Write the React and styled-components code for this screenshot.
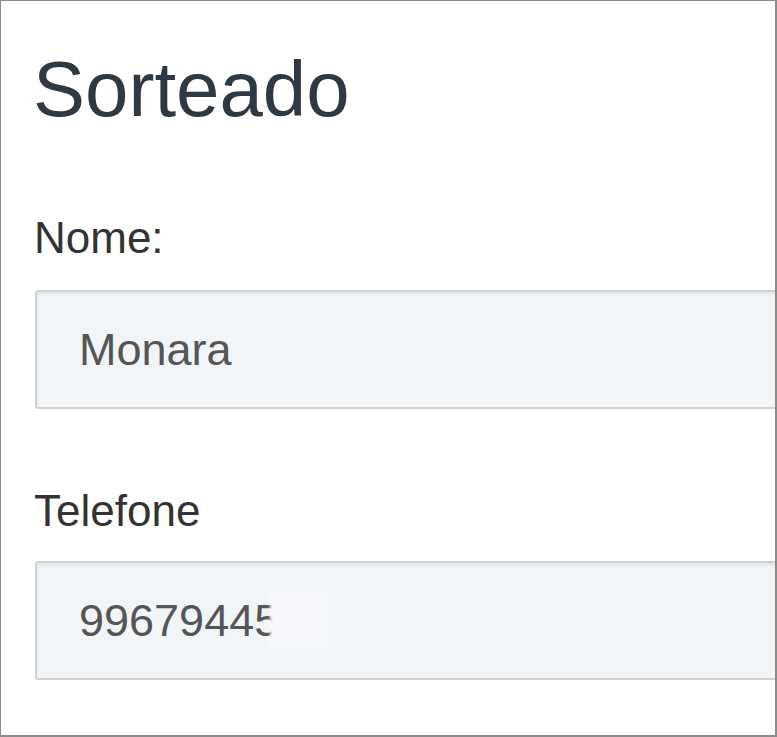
import React from "react";
import styled, { createGlobalStyle } from "styled-components";

const Global = createGlobalStyle`
  html, body { margin: 0; padding: 0; background: #fff; }
  * { box-sizing: border-box; }
`;

const Frame = styled.div`
  width: 777px;
  height: 737px;
  border: 1px solid #8a8a8a;
  border-right-width: 2px;
  border-bottom-width: 2px;
  overflow: hidden;
  padding: 46px 0 0 32px;
  display: flex;
  flex-direction: column;
  font-family: "Liberation Sans", Arial, sans-serif;
  background: #fff;
`;

const Title = styled.h3`
  margin: 0;
  font-size: 78px;
  line-height: 84px;
  font-weight: 400;
  color: #2e3944;
`;

const Group = styled.div`
  display: flex;
  flex-direction: column;
  margin-top: ${(p) => p.$top}px;
`;

const Label = styled.label`
  font-size: 44px;
  line-height: 50px;
  color: #333;
  margin-left: 1px;
`;

const FieldWrap = styled.div`
  position: relative;
  margin-top: ${(p) => p.$gap}px;
  margin-left: 2px;
  width: 800px;
`;

const Input = styled.input`
  display: block;
  width: 100%;
  height: 119px;
  border: 2px solid #cfd1d3;
  border-radius: 3px;
  background: #f2f5f8;
  box-shadow: inset 0 3px 3px rgba(0, 0, 0, 0.05);
  padding: 0 0 0 42px;
  font-family: "Liberation Sans", Arial, sans-serif;
  font-size: 45px;
  color: #555;
  outline: none;
`;

const Redact = styled.span`
  position: absolute;
  left: 235px;
  top: 30px;
  width: 58px;
  height: 58px;
  background: #f5f7fa;
  filter: blur(1.5px);
`;

export default function App() {
  return (
    <>
      <Global />
      <Frame>
        <Title>Sorteado</Title>
        <Group $top={82}>
          <Label htmlFor="nome">Nome:</Label>
          <FieldWrap $gap={27}>
            <Input id="nome" readOnly value="Monara" />
          </FieldWrap>
        </Group>
        <Group $top={77}>
          <Label htmlFor="tel">Telefone</Label>
          <FieldWrap $gap={25}>
            <Input id="tel" readOnly value="99679445" />
            <Redact />
          </FieldWrap>
        </Group>
      </Frame>
    </>
  );
}
